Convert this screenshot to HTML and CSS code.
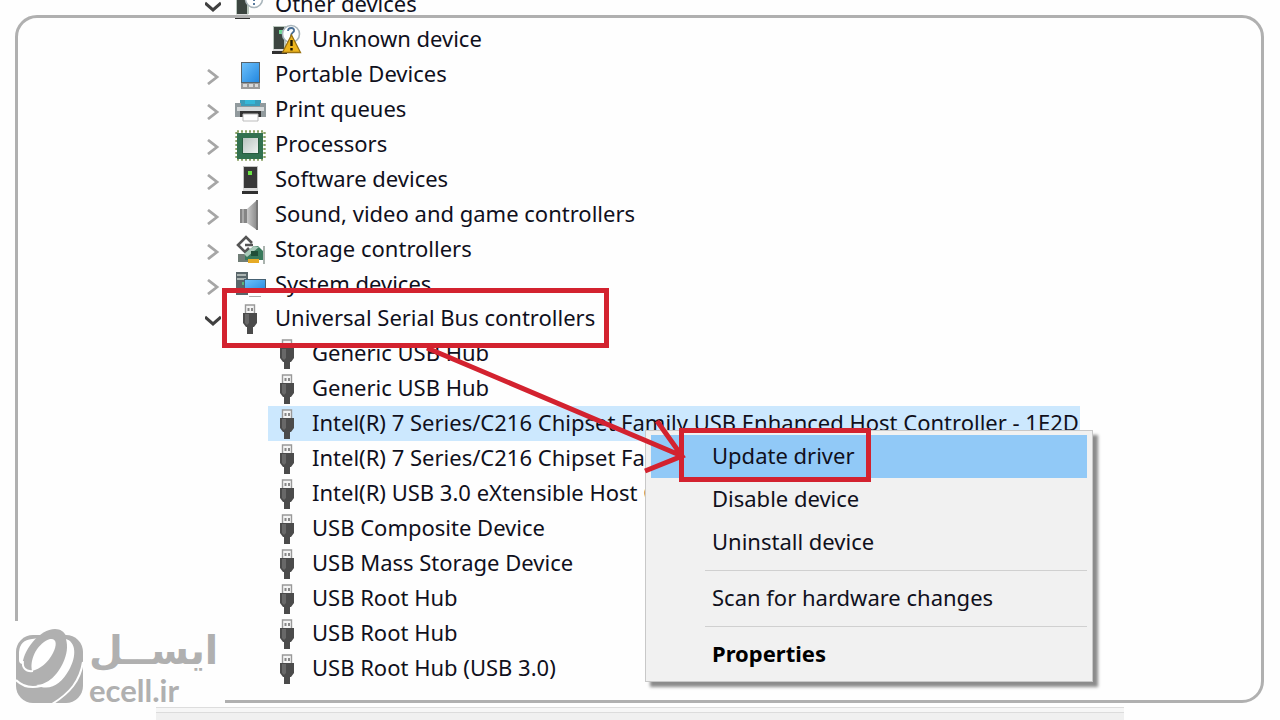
FILE: index.html
```html
<!DOCTYPE html>
<html lang="en">
<head>
<meta charset="utf-8">
<meta name="viewport" content="width=device-width, initial-scale=1">
<title>Device Manager</title>
<link rel="stylesheet" href="styles.css">
</head>
<body>
<svg class="defs" width="0" height="0" aria-hidden="true">
  <defs>
    <linearGradient id="screen" x1="0" y1="0" x2="1" y2="1"><stop offset="0" stop-color="#6cc0fb"/><stop offset="1" stop-color="#2388e0"/></linearGradient>
    <linearGradient id="metal" x1="0" y1="0" x2="1" y2="1"><stop offset="0" stop-color="#b9c4c0"/><stop offset="1" stop-color="#eef2f0"/></linearGradient>
    <linearGradient id="cone" x1="0" y1="0" x2="1" y2="0"><stop offset="0" stop-color="#c9c9c9"/><stop offset="1" stop-color="#8a8a8a"/></linearGradient>
    <symbol id="right" viewBox="0 0 16 16"><path d="M3 1l9 7-9 7" fill="none" stroke="#a6a6a6" stroke-width="2.8"/></symbol>
    <symbol id="down" viewBox="0 0 16 16"><path d="M0 4l8 7 8-7" fill="none" stroke="#404040" stroke-width="3"/></symbol>
    <symbol id="usb" viewBox="0 0 32 32">
      <path d="M11.5 10V2h9v8" fill="#f4f4f4" stroke="#999" stroke-width="1.4"/>
      <path d="M13.5 5h2v3h-2zM17 5h2v3h-2z" fill="#888"/>
      <path d="M9 10h14v10l-3 4h-1v7h-6v-7h-1l-3-4z" fill="#4b4b4b"/>
      <path d="M11 11h4v9l-2 2-2-2z" fill="#686868"/>
    </symbol>
    <symbol id="tower" viewBox="0 0 32 32">
      <path d="M9 2h15v24H9z" fill="#c4c4c4"/><path d="M10 3h13v21H10z" fill="#383838"/>
      <path d="M14 7h4v4h-4z" fill="#6be344"/><path d="M9 24h15v3H9z" fill="#ddd"/><path d="M8 27h16v3H8z" fill="#303030"/>
    </symbol>
    <symbol id="unknown" viewBox="0 0 32 32">
      <path d="M2 2h13v23H2z" fill="#b9c6bd"/><path d="M3 3h10v22H3z" fill="#3c4540"/><path d="M8 6h5v4H8z" fill="#6fd894"/>
      <path d="M2 25h12v2H2z" fill="#ddd"/><path d="M1 27h15v3H1z" fill="#303030"/>
      <circle cx="20" cy="10" r="8.5" fill="#fff" stroke="#a9b5bb" stroke-width="1.6"/>
      <path d="M17 7c0-4 7-4 6 0-1 2-3 2-3 5M20 14v2" fill="none" stroke="#486d94" stroke-width="1.8"/>
    </symbol>
    <symbol id="warning" viewBox="0 0 32 32">
      <use href="#unknown"/><path d="M20.500 11L29.500 28.500H11.500z" fill="#edb51e" stroke="#9a7212" stroke-width="1.3"/><path d="M19.300 16h2.400v6h-2.400zM19.300 24h2.400v2.500h-2.400z" fill="#201800"/>
    </symbol>
    <symbol id="portable" viewBox="0 0 32 32">
      <path d="M7 3h19v27H7z" fill="#56636b"/><path d="M8 4h17v19H8z" fill="url(#screen)"/>
      <path d="M7 24h19v6H7z" fill="#9b9b9b"/><path d="M9 25h4v3H9zM15 25h4v3h-4zM21 25h3v3h-3z" fill="#d9d9d9"/>
    </symbol>
    <symbol id="printer" viewBox="0 0 32 32">
      <path d="M6 6h21v8H6z" fill="#3b9cb9"/><path d="M11 6h10v4H11z" fill="#35b7d8"/>
      <path d="M1 9h6v3h19V9h6v14H1z" fill="#919a9d"/><path d="M3 13h27v4H3z" fill="#d5d9da"/>
      <path d="M6 17h21v6H6z" fill="#343434"/><path d="M9 20h15v7H9z" fill="#fff" stroke="#bbb"/>
    </symbol>
    <symbol id="cpu" viewBox="0 0 32 32">
      <path d="M3 2.500h28M3 30.500h28M2.500 3v28M30.500 3v28" fill="none" stroke="#8aa267" stroke-width="2.400" stroke-dasharray="2 2"/>
      <path d="M3 4h26v26H3z" fill="#327150"/><path d="M8 9h17v16H8z" fill="#285c40"/><path d="M9 9h15v15H9z" fill="url(#metal)"/>
    </symbol>
    <symbol id="sound" viewBox="0 0 32 32">
      <path d="M6 10h8v14H6z" fill="#858585"/><path d="M8 10h2v14H8z" fill="#aaa"/><path d="M13 10L23 1v30L13 24z" fill="url(#cone)"/><path d="M22 1h2v30h-2z" fill="#777"/>
    </symbol>
    <symbol id="storage" viewBox="0 0 32 32">
      <path d="M4 20h12v8H4z" fill="#707d76"/>
      <path d="M18 9l-6-6-8 8 7 7 4-4M11 11h8" fill="none" stroke="#555" stroke-width="2.600"/>
      <path d="M11 19l9-7h4l5 5v9H11z" fill="#38795b"/><path d="M10 20l10-8 5 1-12 10z" fill="#aac9b9"/>
      <path d="M17 17h7v5h-7z" fill="#214f38"/><path d="M29 12h2v18h-2z" fill="#aab3ae"/><path d="M14 25h11v4H14z" fill="#e6aa25"/>
    </symbol>
    <symbol id="system" viewBox="0 0 32 32">
      <path d="M2 3h12v23H2z" fill="#59666a"/><path d="M3 5h9v2H3zM3 9h9v2H3z" fill="#abb4b2"/><path d="M8 13h3v3H8z" fill="#59b37c"/>
      <path d="M10 10h22v14H10z" fill="#456173"/><path d="M11 11h20v12H11z" fill="url(#screen)"/><path d="M15 27h12v1H15z" fill="#aaa"/>
    </symbol>
  </defs>
</svg>

<main class="window">
  <ul class="tree">
    <li><div class="row open"><button class="toggle" aria-label="Collapse Other devices"><svg><use href="#down"/></svg></button><svg class="icon"><use href="#unknown"/></svg><span>Other devices</span></div>
      <ul>
        <li class="row child"><svg class="icon"><use href="#warning"/></svg><span>Unknown device</span></li>
      </ul>
    </li>
    <li class="row"><button class="toggle" aria-label="Expand Portable Devices"><svg><use href="#right"/></svg></button><svg class="icon"><use href="#portable"/></svg><span>Portable Devices</span></li>
    <li class="row"><button class="toggle" aria-label="Expand Print queues"><svg><use href="#right"/></svg></button><svg class="icon"><use href="#printer"/></svg><span>Print queues</span></li>
    <li class="row"><button class="toggle" aria-label="Expand Processors"><svg><use href="#right"/></svg></button><svg class="icon"><use href="#cpu"/></svg><span>Processors</span></li>
    <li class="row"><button class="toggle" aria-label="Expand Software devices"><svg><use href="#right"/></svg></button><svg class="icon"><use href="#tower"/></svg><span>Software devices</span></li>
    <li class="row"><button class="toggle" aria-label="Expand Sound, video and game controllers"><svg><use href="#right"/></svg></button><svg class="icon"><use href="#sound"/></svg><span>Sound, video and game controllers</span></li>
    <li class="row"><button class="toggle" aria-label="Expand Storage controllers"><svg><use href="#right"/></svg></button><svg class="icon"><use href="#storage"/></svg><span>Storage controllers</span></li>
    <li class="row"><button class="toggle" aria-label="Expand System devices"><svg><use href="#right"/></svg></button><svg class="icon"><use href="#system"/></svg><span>System devices</span></li>
    <li><div class="row open"><button class="toggle" aria-label="Collapse Universal Serial Bus controllers"><svg><use href="#down"/></svg></button><svg class="icon"><use href="#usb"/></svg><span>Universal Serial Bus controllers</span></div>
      <ul>
        <li class="row child"><svg class="icon"><use href="#usb"/></svg><span>Generic USB Hub</span></li>
        <li class="row child"><svg class="icon"><use href="#usb"/></svg><span>Generic USB Hub</span></li>
        <li class="row child selected"><svg class="icon"><use href="#usb"/></svg><span>Intel(R) 7 Series/C216 Chipset Family USB Enhanced Host Controller - 1E2D</span></li>
        <li class="row child"><svg class="icon"><use href="#usb"/></svg><span>Intel(R) 7 Series/C216 Chipset Fam</span></li>
        <li class="row child"><svg class="icon"><use href="#usb"/></svg><span>Intel(R) USB 3.0 eXtensible Host C</span></li>
        <li class="row child"><svg class="icon"><use href="#usb"/></svg><span>USB Composite Device</span></li>
        <li class="row child"><svg class="icon"><use href="#usb"/></svg><span>USB Mass Storage Device</span></li>
        <li class="row child"><svg class="icon"><use href="#usb"/></svg><span>USB Root Hub</span></li>
        <li class="row child"><svg class="icon"><use href="#usb"/></svg><span>USB Root Hub</span></li>
        <li class="row child"><svg class="icon"><use href="#usb"/></svg><span>USB Root Hub (USB 3.0)</span></li>
      </ul>
    </li>
  </ul>
  <div class="status"></div>

  <div class="menu" role="menu">
    <button class="active" role="menuitem">Update driver</button>
    <button role="menuitem">Disable device</button>
    <button role="menuitem">Uninstall device</button>
    <hr>
    <button role="menuitem">Scan for hardware changes</button>
    <hr>
    <button class="default" role="menuitem">Properties</button>
  </div>

  <svg class="marks" viewBox="0 0 968 720" aria-hidden="true">
    <g fill="none" stroke="#d3222f" stroke-width="5">
      <path d="M68.500 290.500h382v55h-382z"/>
      <path d="M525.500 430.500h187v49h-187z"/>
      <path d="M271 348L526 456M501 421L526 456L489 471"/>
    </g>
  </svg>
</main>

<div class="frame"></div>
<div class="brand">
  <svg class="emblem" viewBox="0 0 68 76" aria-hidden="true">
    <rect x="0" y="7" width="67" height="68" rx="17" fill="#b0b0b0"/>
    <path d="M3 32V24Q4 12 16 11L23 10Q12 19 7 36Q3 36 3 32z" fill="#fff"/>
    <path d="M6 40C6 22 24 1 39 1C50 1 53 12 51 22C47 40 35 52 20 56z" fill="#b0b0b0"/>
    <path d="M50 11C60 14 61 28 53 42C45 56 34 64 20 57C32 57 42 46 47 35C51 26 52 19 50 11z" fill="#fff"/>
    <path d="M16 43C13 30 23 14 34 11C41 10 41 17 37 25C32 35 24 41 16 43z" fill="#fff"/>
    <path d="M7 33C6 39 9 44 17 43" fill="none" stroke="#fff" stroke-width="2"/>
    <path d="M0 52C8 60 17 60 25 58M67 34C64 53 54 65 36 76" fill="none" stroke="#fff" stroke-width="2"/>
  </svg>
  <div class="wordmark"><span class="fa" lang="fa" dir="rtl">ایســل</span><span class="latin">ecell.ir</span></div>
</div>
</body>
</html>
```
FILE: styles.css
```css
* { box-sizing: border-box; }
body {
  margin: 0;
  min-height: 100vh;
  overflow: hidden;
  position: relative;
  background: #fefefe;
  color: #10101c;
  font: 22px/34px "Noto Sans", "Open Sans", sans-serif;
}
.defs { position: absolute; }
button { border: 0; padding: 0; background: none; color: inherit; font: inherit; }
ul { margin: 0; padding: 0; list-style: none; }

.window { position: relative; max-width: 968px; margin: 0 auto; overflow: hidden; }
.tree { margin-top: -12px; padding-left: 49px; }
.row { display: flex; align-items: center; height: 35px; white-space: nowrap; }
.row.open { height: 34px; }
.row span { padding-bottom: 4px; }
.toggle { display: flex; width: 16px; height: 16px; margin: 4px 13px 0 0; }
.toggle svg { width: 16px; height: 16px; }
.icon { flex: none; width: 32px; height: 32px; margin-right: 9px; }
.child { width: max-content; margin-left: 63px; padding: 0 1px 0 3px; }
.selected { background: #cce8fe; }
.status {
  height: 14px;
  margin-top: 21px;
  border-top: 1px solid #ddd;
  background: linear-gradient(#f6f6f6 4px, #dcdcdc 4px, #dcdcdc 5px, #f0f0f0 5px);
}

.menu {
  position: absolute;
  top: 430px;
  left: 489px;
  width: 448px;
  padding: 4px 5px 5px;
  border: 1px solid #c8c8c8;
  background: #f1f1f1;
  box-shadow: 5px 5px 3px #8c8c8c;
}
.menu button { display: block; width: 100%; height: 43px; padding: 0 0 4px 61px; text-align: left; }
.menu .active { background: #91c9f7; }
.menu .default { color: #000; font-weight: 700; }
.menu hr { height: 1px; margin: 6px 0 6px 54px; border: 0; background: #d0d0d0; }
.marks { position: absolute; top: 0; left: 0; width: 968px; height: 720px; }

.frame {
  position: absolute;
  inset: 15px 16px 18px 15px;
  border: 3px solid #b0b0b0;
  border-radius: 22px;
  pointer-events: none;
}
.brand {
  position: absolute;
  left: 14px;
  bottom: 15px;
  display: flex;
  gap: 5px;
  width: 211px;
  height: 85px;
  padding: 7px 0 0 2px;
  background: #fefefe;
  color: #b0b0b0;
}
.emblem { flex: none; width: 68px; height: 76px; }
.wordmark { display: flex; flex-direction: column; align-items: flex-start; }
.fa { font: 700 39px/46px "DejaVu Sans", sans-serif; }
.latin { font: 700 31px/32px Lato, sans-serif; }
```
